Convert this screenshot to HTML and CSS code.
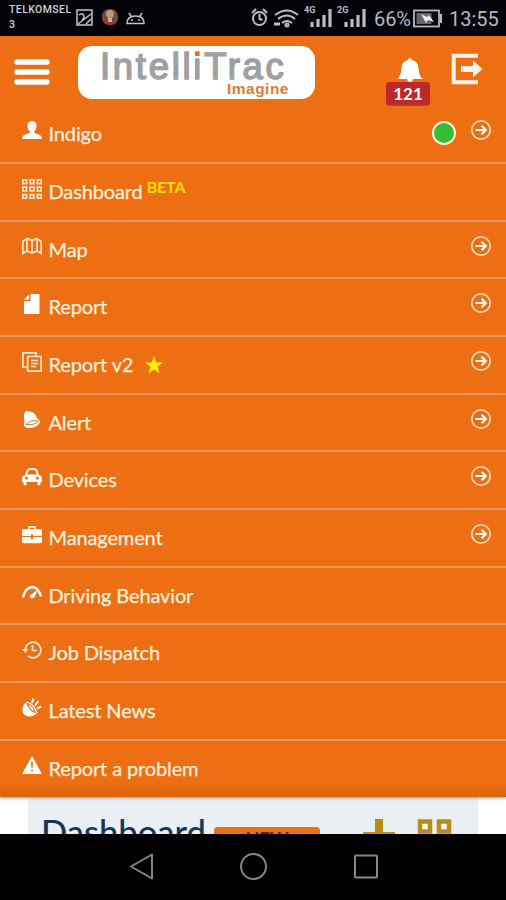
FILE: index.html
```html
<!DOCTYPE html>
<html lang="en">
<head>
<meta charset="utf-8">
<title>IntelliTrac</title>
<link rel="stylesheet" href="styles.css">
</head>
<body>
<div class="status">
  <div class="carrier">TELKOMSEL<br>3</div>
  <svg class="s-left" width="72" height="22" viewBox="0 0 72 22" fill="none" stroke="#c4c4c8" stroke-width="1.5">
    <rect x="2" y="3" width="15" height="15"/><path d="M3 17 16 7M4 8c4-4 7 2 3 5M11 17l5-5"/>
    <rect x="27" y="2" width="16" height="16" rx="7" fill="#74464f" stroke="none"/><circle cx="35" cy="7" r="4" fill="#b6a267" stroke="none"/><path d="M30 14q5 5 10 0" stroke="#a6303b" stroke-width="3"/><path d="M33 11h4v4h-4z" fill="#d0a8a0" stroke="none"/>
    <path d="M52 16.500q0-7.500 8.500-7.500t8.500 7.500zM56 9l-2-3M65 9l2-3M57 12v2M64 12v2"/>
  </svg>
  <svg class="s-right" width="118" height="32" viewBox="0 0 118 32" fill="none" stroke="#bcbcc0" stroke-width="2">
    <circle cx="9.500" cy="18.500" r="6.500"/><path d="M9.500 14v5l3 1M2 13l4-4M13 9l4 4"/>
    <path d="M25 15q12-9 23 0M28 19q9-7 17 0M32 23q5-4 10 0"/><circle cx="37" cy="25" r="1.500"/><path d="M24 24h6" stroke-width="3"/>
    <path d="M62 22v5M68 19v8M74 15v12M80 9v18M96 22v5M102 19v8M108 15v12M114 9v18" stroke-width="3.200"/>
    <text x="54" y="13" class="net">4G</text><text x="87" y="13" class="net">2G</text>
  </svg>
  <span class="pct">66%</span>
  <svg class="batt" width="30" height="20" viewBox="0 0 30 20"><rect x="1" y="1.500" width="25" height="16" fill="#08090d" stroke="#b8b8bc" stroke-width="1.800"/><path d="M3.500 4h15v11h-15z" fill="#66666a"/><path d="M27 5h2v9h-2z" fill="#b8b8bc"/><path d="m8 5 6 3 2-2 5 7-6-2-2 3z" fill="#ececec"/></svg>
  <span class="time">13:55</span>
</div>
<header class="head">
  <svg class="burger" width="36" height="30" viewBox="0 0 36 30"><path d="M3 5h30M3 15h30M3 25h30" stroke="#fff" stroke-width="5.400" stroke-linecap="round"/></svg>
  <div class="logo"><div class="name">Intell<i>i</i>Trac</div><div class="sub">Imagine</div></div>
  <div class="bell">
    <svg width="28" height="26" viewBox="0 0 28 26" fill="#fff"><path d="M14 1q2 0 2 2 6 1 6.500 8 .5 8 4 11H1.500q3.500-3 4-11 .5-7 6.500-8 0-2 2-2zM11 22h6q-.5 3-3 3t-3-3z"/></svg>
    <span class="count">121</span>
  </div>
  <svg class="exit" width="34" height="32" viewBox="0 0 34 32"><path d="M28 2.700H3.700v26.600H28" fill="none" stroke="#fdf3ea" stroke-width="4"/><path d="M11 13h12V7.500l9.500 8.500-9.500 8.500V19H11z" fill="#fdf3ea"/></svg>
</header>
<svg width="0" height="0" class="defs"><symbol id="go" viewBox="0 0 22 22"><circle cx="11" cy="11" r="9.200" fill="none" stroke="#ffdcb8" stroke-width="1.700"/><path d="M5.500 11H15M11.500 6.800l4.300 4.200-4.300 4.200" fill="none" stroke="#fff" stroke-width="2.200"/></symbol></svg>
<nav class="menu">
  <a class="row"><svg class="ic" viewBox="0 0 20 20"><path d="M10 0q4.600 0 4.600 5 0 3-2.300 5.500 0 2 3 2.500 4.700 1 4.700 5H0q0-4 4.700-5 3-.5 3-2.500Q5.400 8 5.400 5 5.400 0 10 0z"/></svg><span>Indigo</span><b class="dot"></b><svg class="go"><use href="#go"/></svg></a>
  <a class="row"><svg class="ic line" viewBox="0 0 20 20"><path d="M.8.800h3.800v3.800H.8zM8.100.800h3.800v3.800H8.100zM15.400.800h3.800v3.800h-3.800zM.8 8.200h3.800V12H.8zM8.100 8.200h3.800V12H8.100zM15.400 8.200h3.800V12h-3.800zM.8 15.600h3.800v3.800H.8zM8.100 15.600h3.800v3.800H8.100zM15.400 15.600h3.800v3.800h-3.800z"/></svg><span>Dashboard</span><em class="beta">BETA</em></a>
  <a class="row"><svg class="ic line" viewBox="0 0 20 20"><path d="M.8 4.500 5 1.500l5 2 5-2 4.200 3V16.500L15 14l-5 2-5-2-4.200 2.500zM5 1.500V14M10 3.500V16M15 1.500V14"/></svg><span>Map</span><svg class="go"><use href="#go"/></svg></a>
  <a class="row"><svg class="ic" viewBox="0 0 20 20"><path d="M8.500 0H17.500v20H2V7h6.500zM7 .500V5.500H2z"/></svg><span>Report</span><svg class="go"><use href="#go"/></svg></a>
  <a class="row"><svg class="ic line" viewBox="0 0 20 20"><path d="M5 15H.9V.900H14V4M5.700 4.500h13.400v14.600H5.700zM9 8.500h7M9 11.500h7M9 14.500h5"/></svg><span>Report v2</span><svg class="star" viewBox="0 0 18 18"><path d="m9 0 2.200 6.500H18l-5.400 4.200 2 6.800L9 13.500l-5.600 4 2-6.800L0 6.500h6.800z"/></svg><svg class="go"><use href="#go"/></svg></a>
  <a class="row"><svg class="ic" viewBox="0 0 20 20"><path d="M3 2q2-2 3.500-.5 6-1 8.500 6.500l3 3q.5 3-4.500 5.500-6 3-11 0-1.500-2 0-5Q1 5 3 2z"/><path d="M4 14.500q4-5 12.500-3.500-3 4.500-12.500 3.500z" fill="none" stroke="#ee6f13"/></svg><span>Alert</span><svg class="go"><use href="#go"/></svg></a>
  <a class="row"><svg class="ic" viewBox="0 0 20 20"><path d="m3 8 1.500-4.500Q5.200 1 8 1h4q2.800 0 3.500 2.500L17 8q3 .5 3 3.500V15h-1.500v2q0 1.500-1.500 1.500T15.500 17v-2h-11v2q0 1.500-1.500 1.500T1.500 17v-2H0v-3.500Q0 8.500 3 8z"/><path d="m5.200 7.500 1-3Q6.700 3 8 3h4q1.300 0 1.800 1.500l1 3z" fill="#ee6f13"/><circle cx="4.500" cy="11" r="1.600" fill="#ee6f13"/><circle cx="15.500" cy="11" r="1.600" fill="#ee6f13"/></svg><span>Devices</span><svg class="go"><use href="#go"/></svg></a>
  <a class="row"><svg class="ic" viewBox="0 0 20 20"><path d="M6 4V2.500Q6 1 7.500 1h5Q14 1 14 2.500V4h4q2 0 2 2v5H0V6q0-2 2-2zm1.700 0h4.600V2.700H7.700zM0 12h9v2h2v-2h9v4.500q0 1.800-2 1.800H2q-2 0-2-1.800z"/><path d="M9.200 9h1.600v5H9.200z" fill="#ee6f13"/></svg><span>Management</span><svg class="go"><use href="#go"/></svg></a>
  <a class="row"><svg class="ic" viewBox="0 0 20 20"><path d="M1 14.500Q3 4.500 11 4q5.500 1 8 9.500" fill="none" stroke="#fff" stroke-width="2.400"/><path d="M16 6.500 12.500 14q-1.500 2-3.500 1t-.5-3z"/></svg><span>Driving Behavior</span></a>
  <a class="row"><svg class="ic line" viewBox="0 0 20 20"><path d="M3.200 10a7.800 7.800 0 1 1 3 6.200M10.500 5v5.500H15"/><path d="M0 9h6.500l-3.200 4z" fill="#ffe8d0" stroke="none"/></svg><span>Job Dispatch</span></a>
  <a class="row"><svg class="ic" viewBox="0 0 20 20"><path d="M5 3.500q7 1.500 10.500 11Q12 19 6 18.500 0 17 .5 11 1 6 5 3.500z"/><path d="M5 5.500q6 2 8.500 9-6-2-8.500-9z" fill="none" stroke="#ee6f13" stroke-width="1.100"/><path d="M10 5 11.500.500M13 7.500 16.500 3M15 10.500l4-1.800" fill="none" stroke="#fff" stroke-width="2"/></svg><span>Latest News</span></a>
  <a class="row"><svg class="ic" viewBox="0 0 20 20"><path d="M10 0 20 18H0z"/><path d="M9 6h2l-.4 6H9.400zM9.200 13.500h1.600v2H9.200z" fill="#ee6f13"/></svg><span>Report a problem</span></a>
</nav>
<main class="page"><div class="panel"><h1>Dashboard</h1><span class="btn">NEW</span>
  <svg class="tools" width="92" height="34" viewBox="0 0 92 34"><path d="M12 0h8v13h12v8H20v13h-8V21H0v-8h12z" fill="#b98d13"/><path d="M57 2.500h10v10H57zM76 2.500h10v10H76zM57 21h10v10H57zM76 21h10v10H76z" fill="#fff" stroke="#b98d13" stroke-width="4.500"/></svg></div></main>
<footer class="keys"><svg width="506" height="66" viewBox="0 0 506 66" fill="none" stroke="#85858a" stroke-width="2" stroke-linejoin="round"><path d="M131 32.500 152 20.500V44.500z"/><circle cx="253.500" cy="32.500" r="12.500"/><rect x="355" y="21.500" width="22" height="22" rx="1"/></svg></footer>
</body>
</html>
```
FILE: styles.css
```css
* { box-sizing: border-box; }
body { margin: 0; width: 506px; height: 900px; overflow: hidden; background: #fff; font-family: Lato, sans-serif; display: flex; flex-direction: column; }
svg { display: block; flex: none; }
.defs { position: absolute; }
.status { height: 36px; flex: none; background: #020308; display: flex; align-items: flex-start; font-family: Roboto, sans-serif; color: #b9b9bd; }
.carrier { width: 65px; margin-left: 9px; padding-top: 2px; font-size: 10.500px; line-height: 15px; font-weight: 500; color: #d2d2d4; letter-spacing: .4px; }
.s-left { margin: 7px 0 0 1px; }
.s-right { margin-left: 103px; }
.net { font: bold 9px Roboto, sans-serif; fill: #bcbcc0; stroke: none; }
.pct { width: 39px; margin-left: 6px; font-size: 20px; line-height: 38px; white-space: nowrap; letter-spacing: -.1px; }
.batt { margin-top: 9px; }
.time { margin-left: 6px; font-size: 20px; line-height: 38px; }
.head { height: 70.300px; flex: none; background: #ee6f13; display: flex; align-items: flex-start; }
.burger { margin: 21px 0 0 14px; }
.logo { width: 237px; height: 53px; margin: 10px 0 0 28px; background: #fff; border-radius: 14px; padding-left: 22px; font-family: "Liberation Sans", sans-serif; white-space: nowrap; }
.name { height: 34px; line-height: 41px; font-size: 36.500px; letter-spacing: 2.700px; color: #a0a0a2; -webkit-text-stroke: 1.500px #a0a0a2; }
.name i { font-style: normal; background: linear-gradient(#ee6f13 0 12px, #a0a0a2 12px); -webkit-background-clip: text; color: transparent; -webkit-text-stroke: 1.500px transparent; }
.sub { padding-right: 26px; text-align: right; font-size: 15.500px; line-height: 17px; font-weight: bold; letter-spacing: .5px; color: #e47a32; }
.bell { width: 44px; margin: 21px 0 0 71px; display: flex; flex-direction: column; align-items: center; }
.bell svg { margin: 0 0 -1px 4px; }
.count { width: 44px; height: 24px; border-radius: 4px; background: #c0272d; color: #fff; font-weight: bold; font-size: 17px; line-height: 24px; text-align: center; }
.exit { margin: 17px 0 0 20px; }
.menu { flex: none; height: 690.500px; background: linear-gradient(#ee6f13 0 678px, #d9640d); display: grid; grid-template-rows: repeat(11, 57.670px) 1fr; box-shadow: 0 1px 3px #999; position: relative; }
.row { display: flex; align-items: flex-start; padding: 15px 14px 0 21.500px; border-bottom: 2px solid #ea9a62; color: #fff0de; font-size: 20px; line-height: 24px; letter-spacing: -.13px; -webkit-text-stroke: .25px #fff0de; white-space: nowrap; }
.row:last-child { border: 0; }
.ic { width: 20px; height: 20px; margin-right: 7px; fill: #fff; }
.ic.line { fill: none; stroke: #ffe8d0; stroke-width: 1.700; }
.go { width: 22px; height: 22px; margin: -2px 0 0 auto; }
.dot { width: 24px; height: 24px; margin: 0 14px 0 auto; border-radius: 50%; background: #35bd35; border: 2.500px solid #fff3e0; }
.dot + .go { margin-left: 0; }
.beta { font-style: normal; font-weight: bold; font-size: 16px; line-height: 15px; color: #ffdf00; margin-left: 4px; -webkit-text-stroke: 0; }
.star { width: 18px; height: 18px; margin: 4px 0 0 12px; fill: #fff000; }
.page { flex: 1; min-height: 0; overflow: hidden; padding: 0 28px; background: #fff; }
.panel { height: 90px; background: #eaeff3; display: flex; align-items: flex-start; }
h1 { width: 165px; margin: 15px 0 0 13px; font-weight: 500; font-size: 34.500px; line-height: 40px; color: #16355a; }
.btn { width: 106px; height: 30px; margin: 30px 0 0 8px; border-radius: 4px; background: #ee6f13; color: #4d2b12; font-size: 18px; line-height: 24px; font-weight: bold; text-align: center; }
.tools { margin: 22px 0 0 43px; }
.keys { height: 66.500px; flex: none; background: #000; }
```
